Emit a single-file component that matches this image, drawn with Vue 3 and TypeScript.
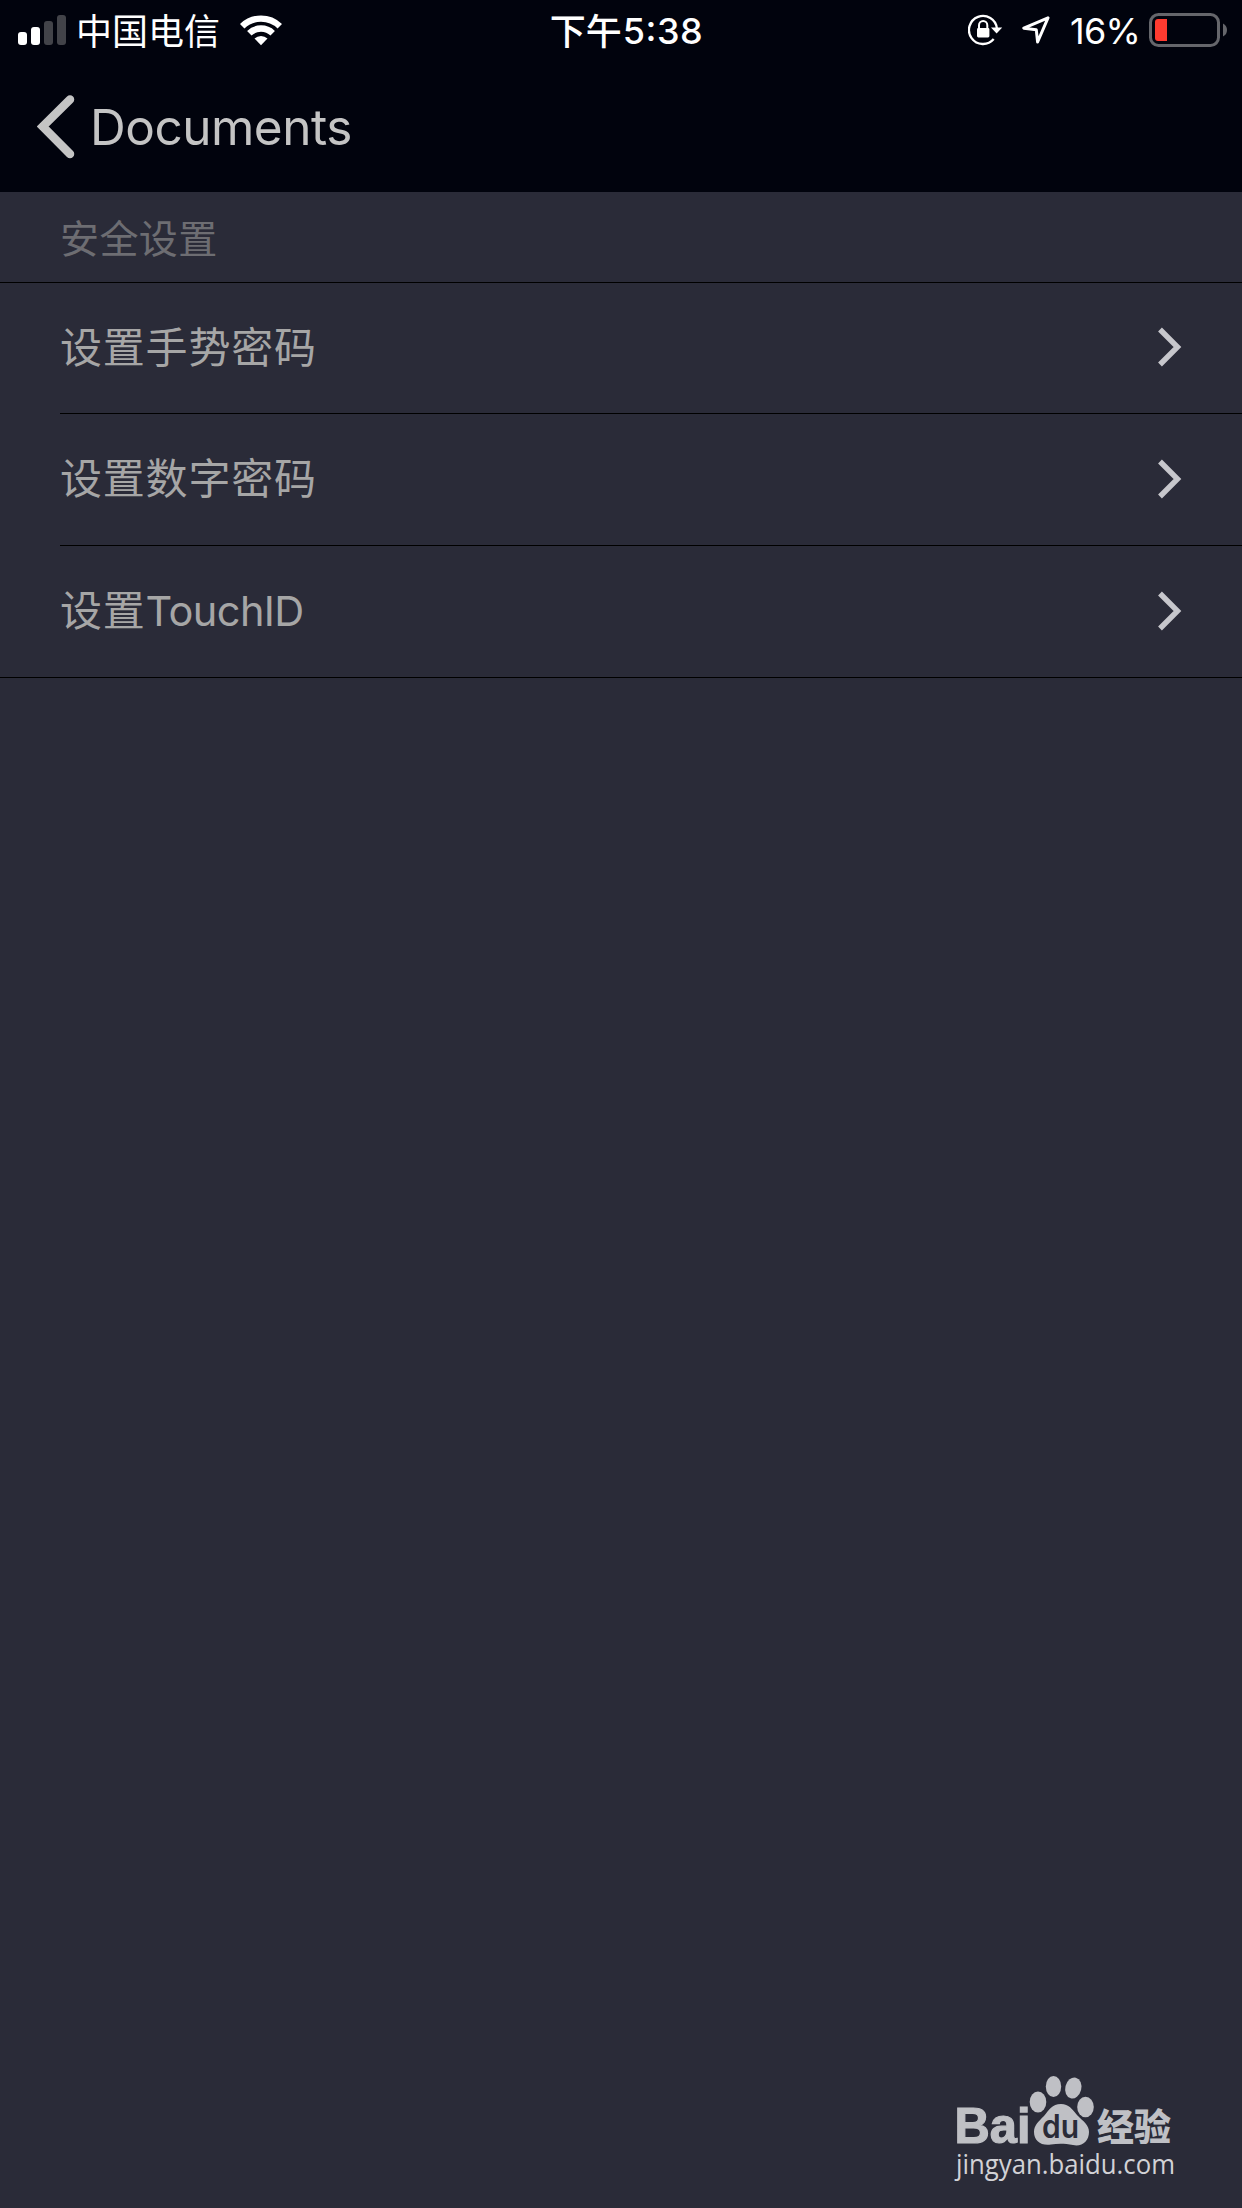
<script setup lang="ts">
interface Row {
  title: string
  latin?: string
}

const rows: Row[] = [
  { title: '设置手势密码' },
  { title: '设置数字密码' },
  { title: '设置', latin: 'TouchID' },
]
</script>

<template>
  <div class="screen">
    <header class="top">
      <div class="status">
        <div class="status-left">
          <svg class="signal" width="48" height="30" viewBox="0 0 48 30">
            <rect x="0" y="17" width="9" height="13" rx="3" fill="#fff" />
            <rect x="13" y="12" width="9" height="18" rx="3" fill="#fff" />
            <rect x="26" y="6" width="9" height="24" rx="3" fill="#424349" />
            <rect x="39" y="0" width="9" height="30" rx="3" fill="#424349" />
          </svg>
          <span class="carrier">中国电信</span>
          <svg class="wifi" width="42" height="31" viewBox="0 0 42 31" fill="none" stroke="#fff" stroke-width="6.4">
            <path d="M2.2 11.2 A27 27 0 0 1 39.8 11.2" />
            <path d="M9.3 18.2 A17 17 0 0 1 32.7 18.2" />
            <path d="M14.5 23.6 A9.5 9.5 0 0 1 27.5 23.6 L21 30.2 Z" fill="#fff" stroke="none" />
          </svg>
        </div>
        <div class="clock"><span class="clock-cjk">下午</span><span class="clock-num">5<span class="colon">:</span>38</span></div>
        <div class="status-right">
          <svg class="lock" width="36" height="32" viewBox="0 0 36 32">
            <path d="M28.9 14.5 A14 14 0 1 0 25.7 25" fill="none" stroke="#fff" stroke-width="2.3" />
            <path d="M23 13.4 H34.2 L28.6 19.6 Z" fill="#fff" />
            <rect x="9" y="14" width="12.4" height="9.5" rx="1.4" fill="#fff" />
            <path d="M11 15 V11.2 A4.1 4.1 0 0 1 19.3 11.2 V15" fill="none" stroke="#fff" stroke-width="2" />
          </svg>
          <svg class="location" width="28" height="28" viewBox="0 0 28 28">
            <path d="M26 1.8 L1.8 12.2 L14.3 13.8 L15.6 26 Z" fill="none" stroke="#fff" stroke-width="3" stroke-linejoin="round" />
          </svg>
          <span class="percent">16%</span>
          <svg class="battery" width="79" height="34" viewBox="0 0 79 34">
            <rect x="1.5" y="1.5" width="68" height="31" rx="8" fill="none" stroke="#65666b" stroke-width="3" />
            <path d="M18 6 H9 Q6 6 6 9 V25 Q6 28 9 28 H18 Z" fill="#ff3b30" />
            <path d="M74 10.5 Q78 12.5 78 17 Q78 21.5 74 23.5 Z" fill="#65666b" />
          </svg>
        </div>
      </div>
      <div class="nav">
        <svg class="back" width="38" height="64" viewBox="0 0 38 64">
          <path d="M33 4.5 L5.7 31.5 L33 59" fill="none" stroke="#c4c4c4" stroke-width="8.5" stroke-linecap="round" />
        </svg>
        <span class="nav-title">Documents</span>
      </div>
    </header>

    <div class="section">安全设置</div>
    <ul class="list">
      <li v-for="row in rows" :key="row.title + row.latin" class="row">
        <div class="row-body">
          <span class="row-title">{{ row.title }}<span v-if="row.latin" class="latin">{{ row.latin }}</span></span>
          <svg class="chevron" width="24" height="40" viewBox="0 0 24 40">
            <path d="M2 2.5 L19.5 20 L2 37.5" fill="none" stroke="#c7c7cc" stroke-width="5.4" />
          </svg>
        </div>
      </li>
    </ul>

    <svg class="watermark" width="240" height="124" viewBox="0 0 240 124">
      <g fill="#bfc0c5">
        <text class="logo" x="1.5" y="71" textLength="76" lengthAdjust="spacingAndGlyphs">Bai</text>
        <ellipse cx="85" cy="30" rx="8.3" ry="10.6" />
        <ellipse cx="100.5" cy="14.5" rx="7.7" ry="10.6" />
        <ellipse cx="120.3" cy="16" rx="8" ry="10.6" transform="rotate(14 120.3 16)" />
        <ellipse cx="132.5" cy="35" rx="8.3" ry="10.3" />
        <path d="M108 32 C116 32 119 37 124 43 C131 50 136 53 136 60 C136 69 129 75 120 73 C112 71.5 105 71.5 98 72.5 C88 74 81 69 81 60 C81 53 86 49 91 44 C96 38 99 32 108 32 Z" />
        <text class="jingyan" x="144" y="69" textLength="74" lengthAdjust="spacingAndGlyphs">经验</text>
      </g>
      <text class="du" x="89" y="65.5" textLength="37" lengthAdjust="spacingAndGlyphs">du</text>
      <text class="site" x="3" y="101.5" textLength="219" lengthAdjust="spacingAndGlyphs">jingyan.baidu.com</text>
    </svg>
  </div>
</template>

<style>
body {
  margin: 0;
  background: #2a2b38;
}
</style>

<style scoped>
.screen {
  position: relative;
  width: 1242px;
  height: 2208px;
  overflow: hidden;
  background: #2a2b38;
  font-family: Inter, "Noto Sans CJK SC", sans-serif;
}
svg {
  display: block;
  flex: none;
}
.top {
  height: 192px;
  background: #01030d;
}
.status {
  display: grid;
  grid-template-columns: 1fr auto 1fr;
  height: 60px;
  color: #fff;
  white-space: nowrap;
}
.status-left,
.status-right {
  display: flex;
  align-items: flex-start;
}
.status-left {
  padding-left: 18px;
}
.signal {
  margin-top: 15px;
}
.carrier {
  width: 144px;
  margin-left: 10px;
  font: 36px/58px "Noto Sans CJK SC", sans-serif;
}
.wifi {
  margin: 15px 0 0 20px;
}
.clock {
  display: flex;
  line-height: 62px;
  margin-left: 11px;
}
.clock-cjk {
  font: 500 36px/58px "Noto Sans CJK SC", sans-serif;
}
.clock-num {
  margin-left: 1px;
  font-size: 36px;
  font-weight: 550;
  letter-spacing: 0.5px;
}
.colon {
  position: relative;
  top: -3px;
}
.status-right {
  justify-content: flex-end;
  padding-right: 14px;
}
.lock {
  margin-top: 14px;
}
.location {
  margin: 16px 0 0 18px;
}
.percent {
  width: 68px;
  margin-left: 20px;
  font-size: 36px;
  letter-spacing: -0.7px;
  line-height: 63px;
}
.battery {
  margin: 13px 0 0 11px;
}
.nav {
  display: flex;
  align-items: center;
  height: 132px;
  padding-left: 37px;
}
.back {
  margin-top: 1px;
}
.nav-title {
  margin: 2px 0 0 15px;
  color: #c4c4c4;
  font-size: 49.5px;
  letter-spacing: -0.5px;
  line-height: 60px;
}
.section {
  height: 90px;
  padding-left: 60px;
  color: #6d6d72;
  font-size: 39px;
  letter-spacing: 0.4px;
  line-height: 93px;
}
.list {
  margin: 0;
  padding: 0;
  list-style: none;
  border-top: 1px solid #000;
  border-bottom: 1px solid #000;
}
.row {
  padding-left: 60px;
}
.row-body {
  display: flex;
  justify-content: space-between;
  height: 131px;
  padding-right: 60px;
}
.row:first-child .row-body {
  height: 130px;
}
.row + .row .row-body {
  border-top: 1px solid #000;
}
.row-title {
  color: #a6a6a6;
  font-size: 42px;
  letter-spacing: 0.8px;
  line-height: 130px;
}
.latin {
  font-size: 41.5px;
  letter-spacing: -0.6px;
}
.chevron {
  margin-top: 44px;
}
.row + .row .chevron {
  margin-top: 45px;
}
.watermark {
  position: absolute;
  left: 953px;
  top: 2072px;
}
.logo {
  font: 700 50px "Liberation Sans", sans-serif;
  stroke: #bfc0c5;
  stroke-width: 1.2px;
}
.jingyan {
  font: 900 37px "Noto Sans CJK SC", sans-serif;
}
.du {
  fill: #2a2b38;
  font: 600 32px Inter, sans-serif;
}
.site {
  fill: #d2d2d6;
  font: 500 27px "Open Sans", "Noto Sans", sans-serif;
}
</style>
